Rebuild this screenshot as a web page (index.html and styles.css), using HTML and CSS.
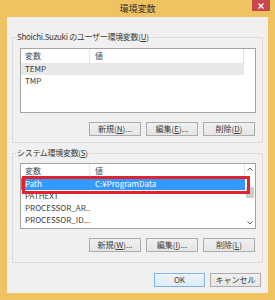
FILE: index.html
```html
<!DOCTYPE html>
<html lang="ja">
<head>
  <meta charset="UTF-8">
  <title>環境変数</title>
  <link rel="stylesheet" href="styles.css">
</head>
<body>
  <div class="window">
    <div class="titlebar">
      <span></span>
      <span class="title">環境変数</span>
      <span class="close">
        <svg width="6" height="6" viewBox="0 0 6 6"><path d="M0.5 0.5L5.5 5.5M5.5 0.5L0.5 5.5" stroke="#fff" stroke-width="1.3"/></svg>
      </span>
    </div>

    <div class="client">
      <fieldset class="group">
        <legend>Shoichi.Suzuki のユーザー環境変数(<u>U</u>)</legend>
        <div class="listbox user">
          <div class="list-main">
            <div class="list-head"><span class="cell name">変数</span><span class="cell value">値</span></div>
            <div class="row idle"><span class="cell name">TEMP</span><span class="cell value"></span></div>
            <div class="row"><span class="cell name">TMP</span><span class="cell value"></span></div>
          </div>
        </div>
        <div class="buttons">
          <button class="btn">新規(<u>N</u>)...</button>
          <button class="btn">編集(<u>E</u>)...</button>
          <button class="btn">削除(<u>D</u>)</button>
        </div>
      </fieldset>

      <fieldset class="group system">
        <legend>システム環境変数(<u>S</u>)</legend>
        <div class="listbox sys">
          <div class="list-main">
            <div class="list-head"><span class="cell name">変数</span><span class="cell value">値</span></div>
            <div class="row selected"><span class="cell name">Path</span><span class="cell value">C:¥ProgramData</span></div>
            <div class="row"><span class="cell name">PATHEXT</span><span class="cell value"></span></div>
            <div class="row"><span class="cell name">PROCESSOR_AR..</span><span class="cell value"></span></div>
            <div class="row"><span class="cell name">PROCESSOR_ID...</span><span class="cell value"></span></div>
          </div>
          <div class="scrollbar">
            <span class="arrow"><svg width="6" height="4" viewBox="0 0 6 4"><path d="M0.5 3.5L3 1L5.5 3.5" fill="none" stroke="#606060"/></svg></span>
            <span class="track"><span class="thumb"></span></span>
            <span class="arrow"><svg width="6" height="4" viewBox="0 0 6 4"><path d="M0.5 0.5L3 3L5.5 0.5" fill="none" stroke="#606060"/></svg></span>
          </div>
          <div class="callout"></div>
        </div>
        <div class="buttons">
          <button class="btn">新規(<u>W</u>)...</button>
          <button class="btn">編集(<u>I</u>)...</button>
          <button class="btn">削除(<u>L</u>)</button>
        </div>
      </fieldset>

      <div class="actions">
        <button class="btn default">OK</button>
        <button class="btn">キャンセル</button>
      </div>
    </div>
  </div>
</body>
</html>
```

FILE: styles.css
```css
body {
  margin: 0;
  width: 275px;
  height: 300px;
  overflow: hidden;
  background: #efc35f;
  font-family: "Noto Sans CJK JP", "Liberation Sans", sans-serif;
  font-size: 8px;
  color: #3a3a3a;
}

.window {
  display: flex;
  flex-direction: column;
  height: 300px;
}

/* title bar */
.titlebar {
  height: 17px;
  display: grid;
  grid-template-columns: 1fr auto 1fr;
}
.title {
  font-size: 9px;
  line-height: 17px;
  color: #333;
}
.close {
  justify-self: end;
  margin-right: 5px;
  width: 18px;
  height: 11px;
  background: #c9474b;
  display: flex;
  align-items: center;
  justify-content: center;
}

/* dialog body */
.client {
  flex: 1;
  margin: 0 7px 7px;
  padding-top: 14px;
  background: #f0f0f0;
  display: flex;
  flex-direction: column;
}

.group {
  margin: 0 5px;
  padding: 5px 6px 6px 7px;
  border: 1px solid #dcdcdc;
  min-width: 0;
}
.group legend {
  margin-left: -4px;
  padding: 0 1px;
  line-height: 12px;
  letter-spacing: -0.3px;
  color: #3a3a3a;
}
.group.system {
  margin-top: 4px;
  padding-top: 4px;
  padding-bottom: 10px;
}

.listbox {
  position: relative;
  box-sizing: border-box;
  height: 65px;
  background: #fff;
  border: 1px solid #a3a3a3;
  display: flex;
}
.listbox.sys {
  height: 66px;
}
.list-main {
  flex: 1;
  min-width: 0;
}
.list-head,
.row {
  display: flex;
  height: 12px;
  line-height: 12px;
}
.list-head {
  height: 14px;
  line-height: 14px;
  color: #4a4a4a;
}
.list-head .cell {
  border-right: 1px solid #e5e5e5;
}
.cell {
  box-sizing: border-box;
  padding-left: 4px;
  white-space: nowrap;
}
.cell.name {
  width: 69px;
}
.cell.value {
  width: 154px;
  padding-left: 5px;
}
.sys .cell.value {
  flex: 1;
}
.row.idle {
  width: 223px;
  background: #e8e8e8;
}
.row.selected {
  background: #3399ff;
  color: #fff;
}

/* scrollbar of the system list */
.scrollbar {
  width: 10px;
  display: flex;
  flex-direction: column;
}
.arrow {
  height: 10px;
  display: flex;
  align-items: center;
  justify-content: center;
}
.track {
  flex: 1;
  padding-top: 13px;
}
.thumb {
  display: block;
  margin-left: 1px;
  width: 8px;
  height: 11px;
  background: #cdcdcd;
}

/* red marker drawn over the Path row */
.callout {
  position: absolute;
  left: 1px;
  top: 12px;
  width: 228px;
  height: 18px;
  box-sizing: border-box;
  border: 3px solid #e3232c;
}

.buttons,
.actions {
  display: flex;
  justify-content: flex-end;
  gap: 5px;
  margin-top: 9px;
  padding-right: 1px;
}
.actions {
  margin-top: 10px;
  padding-right: 7px;
}
.btn {
  width: 52px;
  height: 14px;
  box-sizing: border-box;
  padding: 0;
  border: 1px solid #acacac;
  background: linear-gradient(#f0f0f0, #e5e5e5);
  font: inherit;
  line-height: 12px;
  color: #3a3a3a;
}
.actions .btn {
  width: 51px;
}
.btn.default {
  border-color: #7eb4ea;
  background: linear-gradient(#ecf4fc, #dcecfc);
}
```
